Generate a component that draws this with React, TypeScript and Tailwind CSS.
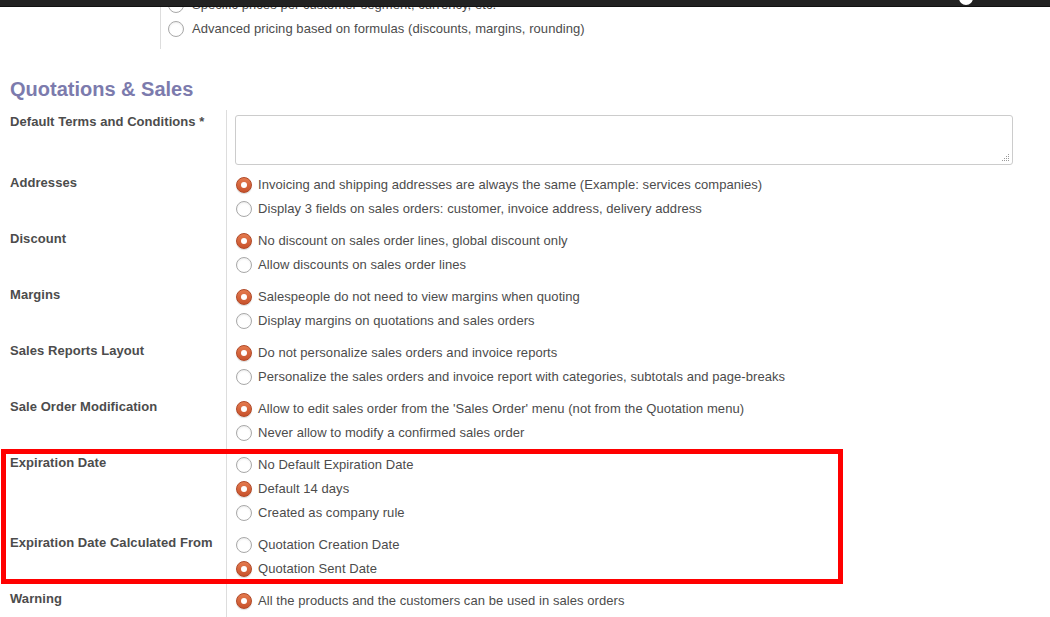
import React from 'react';

type Opt = { label: string; checked?: boolean };

const Radio: React.FC<{ checked?: boolean }> = ({ checked }) =>
  checked ? (
    <span className="w-4 h-4 rounded-full shrink-0 flex items-center justify-center bg-linear-to-b from-[#e47a4e] to-[#c8522c] border border-[#b04826] shadow-[0_1px_1px_rgba(0,0,0,0.15)]">
      <span className="w-[6px] h-[6px] rounded-full bg-white" />
    </span>
  ) : (
    <span className="w-4 h-4 rounded-full shrink-0 bg-white border border-[#a8a8a8] shadow-[inset_0_1px_2px_rgba(0,0,0,0.08)]" />
  );

const Option: React.FC<Opt> = ({ label, checked }) => (
  <div className="h-6 flex items-center gap-[6px] whitespace-nowrap">
    <Radio checked={checked} />
    <span>{label}</span>
  </div>
);

const SettingRow: React.FC<{ label: string; options?: Opt[] }> = ({ label, options }) => (
  <div className="grid grid-cols-[226px_1fr]">
    <div className="pl-[10px] pt-[1px] font-bold leading-[18px]">{label}</div>
    <div className="border-l border-[#dddddd] pl-[9px] pb-2">
      {options?.map((o) => <Option key={o.label} {...o} />)}
    </div>
  </div>
);

export default function App() {
  return (
    <div className="relative flex flex-col h-[617px] overflow-hidden bg-white text-[13px] tracking-[0.06px] text-[#4c4c4c] font-['Liberation_Sans',Arial,sans-serif]">
      {/* fixed top navbar, page is scrolled underneath */}
      <div className="absolute top-0 left-0 right-0 h-[7px] bg-[#222222] border-b border-[#111111] z-10 overflow-hidden">
        <div className="absolute left-[959px] top-[-9px] w-[14px] h-[14px] rounded-full bg-white" />
      </div>

      <div className="-mt-[7px]">
        {/* tail of the previous section */}
        <div className="grid grid-cols-[160px_1fr]">
          <div />
          <div className="border-l border-[#dddddd] pl-[7px] pb-2 [&_span.gap-fix]:ml-[2px]">
            <div className="h-6 flex items-center gap-[8px] whitespace-nowrap">
              <Radio />
              <span>Specific prices per customer segment, currency, etc.</span>
            </div>
            <div className="h-6 flex items-center gap-[8px] whitespace-nowrap">
              <Radio />
              <span>Advanced pricing based on formulas (discounts, margins, rounding)</span>
            </div>
          </div>
        </div>

        <h2 className="mt-[29px] mb-[10px] pl-[10px] text-[20px] leading-[22px] font-bold tracking-normal text-[#7c7bad]">
          Quotations &amp; Sales
        </h2>

        <div className="grid grid-cols-[226px_1fr]">
          <div className="pl-[10px] pt-[3px] font-bold leading-[18px]">Default Terms and Conditions *</div>
          <div className="border-l border-[#dddddd] pl-[8px] pt-[5px] pb-2">
            <div className="relative w-[778px] h-[50px]">
              <textarea className="block w-full h-full border border-[#cccccc] rounded-[3px] bg-white outline-none resize-none" />
              <svg className="absolute right-[3px] bottom-[3px]" width="8" height="8" viewBox="0 0 8 8">
                <g fill="#9a9a9a">
                  <rect x="6" y="0" width="1" height="1" />
                  <rect x="4" y="2" width="1" height="1" />
                  <rect x="6" y="2" width="1" height="1" />
                  <rect x="2" y="4" width="1" height="1" />
                  <rect x="4" y="4" width="1" height="1" />
                  <rect x="6" y="4" width="1" height="1" />
                  <rect x="0" y="6" width="1" height="1" />
                  <rect x="2" y="6" width="1" height="1" />
                  <rect x="4" y="6" width="1" height="1" />
                  <rect x="6" y="6" width="1" height="1" />
                </g>
              </svg>
            </div>
          </div>
        </div>

        <SettingRow
          label="Addresses"
          options={[
            { label: 'Invoicing and shipping addresses are always the same (Example: services companies)', checked: true },
            { label: 'Display 3 fields on sales orders: customer, invoice address, delivery address' },
          ]}
        />
        <SettingRow
          label="Discount"
          options={[
            { label: 'No discount on sales order lines, global discount only', checked: true },
            { label: 'Allow discounts on sales order lines' },
          ]}
        />
        <SettingRow
          label="Margins"
          options={[
            { label: 'Salespeople do not need to view margins when quoting', checked: true },
            { label: 'Display margins on quotations and sales orders' },
          ]}
        />
        <SettingRow
          label="Sales Reports Layout"
          options={[
            { label: 'Do not personalize sales orders and invoice reports', checked: true },
            { label: 'Personalize the sales orders and invoice report with categories, subtotals and page-breaks' },
          ]}
        />
        <SettingRow
          label="Sale Order Modification"
          options={[
            { label: "Allow to edit sales order from the 'Sales Order' menu (not from the Quotation menu)", checked: true },
            { label: 'Never allow to modify a confirmed sales order' },
          ]}
        />

        {/* highlighted rows */}
        <div className="relative">
          <SettingRow
            label="Expiration Date"
            options={[
              { label: 'No Default Expiration Date' },
              { label: 'Default 14 days', checked: true },
              { label: 'Created as company rule' },
            ]}
          />
          <SettingRow
            label="Expiration Date Calculated From"
            options={[
              { label: 'Quotation Creation Date' },
              { label: 'Quotation Sent Date', checked: true },
            ]}
          />
          <div className="absolute left-[1px] top-[-4px] w-[842px] h-[135px] border-[5px] border-[#ff0000] pointer-events-none" />
        </div>

        <SettingRow
          label="Warning"
          options={[
            { label: 'All the products and the customers can be used in sales orders', checked: true },
            { label: 'An informative or blocking warning can be set on a product or a customer' },
          ]}
        />
      </div>
    </div>
  );
}
